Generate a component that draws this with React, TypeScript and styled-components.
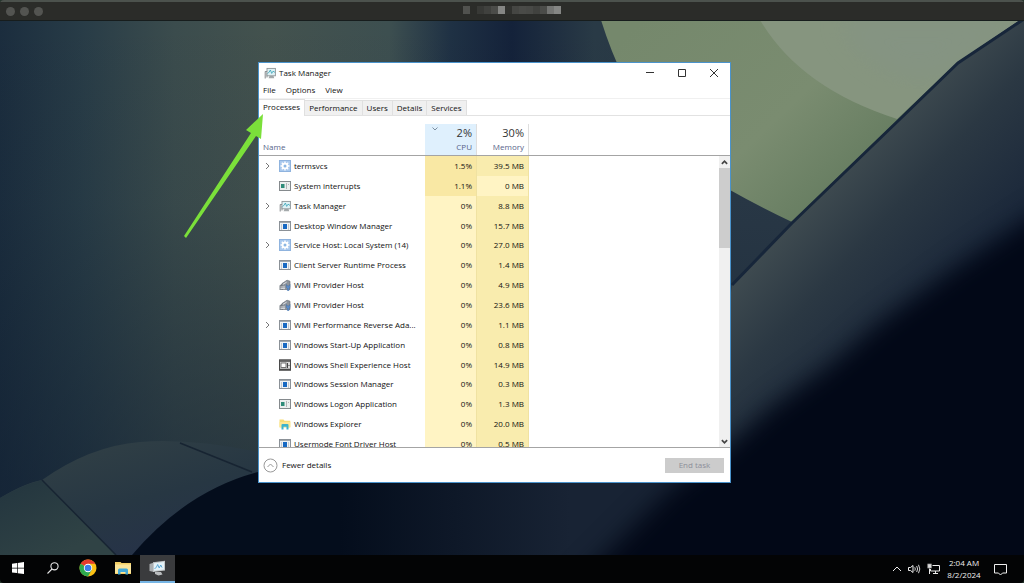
import React from 'react';
import styled, { createGlobalStyle, css } from 'styled-components';

const GlobalStyle = createGlobalStyle`
  *, *::before, *::after { box-sizing: border-box; }
  body { margin: 0; background: #25372d; }
  body, button { font-family: "Open Sans", "Noto Sans", sans-serif; font-size: 8px; line-height: 12px; }
  button { border: 0; padding: 0; background: none; color: inherit; }
  svg { display: block; flex: none; }
`;

const Screen = styled.div`
  display: flex;
  flex-direction: column;
  min-height: 100vh;
  overflow: hidden;
  border-radius: 4px;
`;

const HostBar = styled.header`
  display: grid;
  grid-template-columns: 1fr auto 1fr;
  align-items: center;
  height: 21px;
  padding: 0 6px;
  background: #2b2c29;
  border-top: 2px solid #4c524d;
  border-bottom: 1px solid #171d1d;
`;

const Lights = styled.div`
  display: flex;
  gap: 5px;
`;

const Light = styled.button`
  width: 9px;
  height: 9px;
  border-radius: 50%;
  background: #535451;
`;

const Redacted = styled.div`
  display: flex;
  height: 8px;
  margin-bottom: 2px;
`;

const Pixel = styled.span<{ $tone: string }>`
  width: 7px;
  background: ${(p) => p.$tone};
`;

const Desktop = styled.main`
  position: relative;
  flex: 1;
  min-height: 534px;
  overflow: hidden;
  background: #050d1c;
`;

const Backdrop = styled.svg`
  position: absolute;
  inset: 0;
  width: 100%;
  height: 100%;
`;

const Window = styled.section`
  position: absolute;
  left: 258px;
  top: 41px;
  display: flex;
  flex-direction: column;
  width: 473px;
  height: 421px;
  background: #fff;
  border: 1px solid #4a93cc;
  color: #111;
`;

const Pointer = styled.svg`
  position: absolute;
  left: 183px;
  top: 92px;
`;

const TitleBar = styled.div`
  display: flex;
  align-items: center;
  height: 20px;
  padding-left: 5px;
`;

const Title = styled.h1`
  flex: 1;
  margin: 0 0 0 3px;
  font-size: 8px;
  font-weight: 400;
`;

const WindowButton = styled.button`
  display: flex;
  align-items: center;
  justify-content: center;
  width: 32px;
  height: 20px;
  color: #333;
`;

const MenuBar = styled.nav`
  display: flex;
  gap: 10px;
  height: 16px;
  padding: 0 4px;
  border-bottom: 1px solid #f0f0f0;
`;

const MenuButton = styled.button`
  height: 14px;
`;

const Tabs = styled.div`
  display: flex;
  align-items: flex-end;
  height: 17px;
  border-bottom: 1px solid #e2e2e2;
`;

const Tab = styled.button<{ $active?: boolean }>`
  height: 15px;
  padding: 0 4px;
  background: #f0f0f0;
  border: 1px solid #e0e0e0;
  border-width: 1px 1px 0 0;
  ${(p) =>
    p.$active &&
    css`
      height: 17px;
      margin-bottom: -1px;
      padding-bottom: 2px;
      background: #fff;
    `}
`;

const ListArea = styled.div`
  display: flex;
  flex: 1;
  min-height: 0;
  border-bottom: 1px solid #a4a4a4;
`;

const TableBox = styled.div`
  flex: 1;
  overflow: hidden;
`;

const Table = styled.table`
  width: 100%;
  height: 338px;
  table-layout: fixed;
  border-collapse: separate;
  border-spacing: 0;
`;

const NameCol = styled.col`
  width: 166px;
`;

const ValueCol = styled.col`
  width: 52px;
`;

const HeadCell = styled.th`
  height: 40px;
  padding: 0;
  font-weight: 400;
  color: #56648a;
  vertical-align: bottom;
  text-align: left;
  border-bottom: 1px solid #a4a4a4;
`;

const NameLabel = styled.div`
  padding: 0 4px 2px;
`;

const Usage = styled.div<{ $sorted?: boolean }>`
  position: relative;
  display: flex;
  flex-direction: column;
  justify-content: space-between;
  height: 31px;
  padding: 1px 4px 2px;
  text-align: right;
  border-right: 1px solid #dedede;
  background: ${(p) => (p.$sorted ? '#dff0fd' : '#fff')};
`;

const Total = styled.span`
  font-size: 11px;
  line-height: 16px;
  color: #333;
`;

const SortMark = styled.svg`
  position: absolute;
  left: 7px;
  top: 3px;
`;

const Cell = styled.td`
  padding: 0;
`;

const HEAT = { low: '#fff4c4', mid: '#f9ecae', high: '#f9e8a4' };

const ValueCell = styled.td<{ $heat: keyof typeof HEAT }>`
  padding: 0 4px 0 0;
  text-align: right;
  background: ${(p) => HEAT[p.$heat]};
  border-right: 1px solid #f0e2a2;
`;

const ProcessName = styled.div`
  display: flex;
  align-items: center;
  padding-left: 5px;
  height: 12px;
`;

const Expander = styled.span`
  width: 15px;
  color: #777;
`;

const ProcessLabel = styled.span`
  flex: 1;
  padding: 0 4px 0 3px;
  overflow: hidden;
  white-space: nowrap;
  text-overflow: ellipsis;
`;

const ScrollColumn = styled.div`
  display: flex;
  flex-direction: column;
  width: 11px;
`;

const ScrollHead = styled.div`
  height: 40px;
  border-bottom: 1px solid #a4a4a4;
`;

const ScrollTrack = styled.div`
  display: flex;
  flex-direction: column;
  flex: 1;
  background: #f0f0f0;
`;

const ScrollButton = styled.button`
  display: flex;
  align-items: center;
  justify-content: center;
  height: 12px;
  color: #444;
`;

const ScrollThumb = styled.div`
  height: 80px;
  margin-bottom: auto;
  background: #cdcdcd;
`;

const Footer = styled.footer`
  display: flex;
  align-items: center;
  justify-content: space-between;
  height: 34px;
  padding: 0 6px 0 4px;
`;

const DetailsButton = styled.button`
  display: flex;
  align-items: center;
  gap: 4px;
`;

const EndButton = styled.button`
  width: 59px;
  height: 15px;
  background: #cccccc;
  color: #8c8f9a;
`;

const Taskbar = styled.footer`
  display: flex;
  align-items: center;
  height: 28px;
  background: #030405;
  color: #eee;
`;

const TaskButton = styled.button<{ $active?: boolean }>`
  display: flex;
  align-items: center;
  justify-content: center;
  width: 35px;
  height: 28px;
  border-bottom: 2px solid ${(p) => (p.$active ? '#76b5e5' : 'transparent')};
  background: ${(p) => (p.$active ? '#3a3b3d' : 'none')};
`;

const Tray = styled.div`
  display: flex;
  align-items: center;
  gap: 6px;
  margin-left: auto;
  padding-right: 17px;
`;

const Clock = styled.time`
  width: 36px;
  margin-right: 6px;
  text-align: center;
`;

type IconKind = 'gear' | 'logon' | 'monitor' | 'app' | 'wmi' | 'shell' | 'folder';

const MonitorIcon = ({ size = 12 }: { size?: number }) => (
  <svg width={size} height={size} viewBox="0 0 12 12" aria-hidden="true">
    <path d="M1.200 11.500V4.500h2.500" fill="none" stroke="#777c7e" strokeWidth=".9" />
    <path d="M2 5.500h2v5H2z" fill="#c5c8c8" />
    <path d="M5.500 9h4l.8 2.200H4.500z" fill="#a5aaac" />
    <rect x="3" y="1.400" width="8.400" height="7.400" fill="#dff1f5" stroke="#8d9497" strokeWidth=".9" />
    <path d="M3.600 6.600 5.200 5l1.200-2 1.300 3.400L9 4.200l2 1.200" fill="none" stroke="#36a3b8" strokeWidth=".8" />
  </svg>
);

const ProcessIcon = ({ kind }: { kind: IconKind }) => {
  if (kind === 'monitor') return <MonitorIcon />;
  return (
    <svg width="12" height="12" viewBox="0 0 12 12" aria-hidden="true">
      {kind === 'gear' && (
        <>
          <rect x=".5" y=".5" width="11" height="11" fill="#a9c9ee" stroke="#8fb3de" />
          <path d="M6 1.500v9M1.500 6h9M2.800 2.800l6.400 6.400M9.200 2.800 2.800 9.200" stroke="#fff" strokeWidth="1.400" />
          <circle cx="6" cy="6" r="3.300" fill="#fff" />
          <circle cx="6" cy="6" r="1.500" fill="#8ab6e3" />
        </>
      )}
      {kind === 'logon' && (
        <>
          <rect x=".5" y="1.500" width="11" height="9" fill="#eceeee" stroke="#858a8d" />
          <rect x="2" y="4" width="3.500" height="4" fill="#2f8b79" />
          <path d="M7.500 3v6M9.500 4v1" stroke="#b2b6b8" />
        </>
      )}
      {kind === 'app' && (
        <>
          <rect x=".5" y="1.500" width="11" height="9" fill="#f0f3f5" stroke="#8b9197" />
          <path d="M1 2.500h10" stroke="#a2aab0" />
          <path d="M2.500 4v6M9.500 4v6" stroke="#c5ccd1" />
          <rect x="4" y="4" width="4" height="5" fill="#1769c2" />
        </>
      )}
      {kind === 'wmi' && (
        <>
          <path d="M.5 6.500 4 4v7H.5z" fill="#7d838a" />
          <path d="M3 4.500 8 1.200l3 1V10.500H3z" fill="#8d949c" stroke="#5f666d" strokeWidth=".6" />
          <path d="M3.800 5.400 7.600 3.200M1.500 8h4.500M1.500 9.600h4.500" stroke="#e5e8eb" strokeWidth=".9" />
          <path d="M7.400 5.500v3l1 .8v2.200h1.600V9.300l1-.8v-3L10 7H8.500z" fill="#5f8fca" stroke="#3e6da6" strokeWidth=".5" />
        </>
      )}
      {kind === 'shell' && (
        <>
          <rect x=".5" y=".8" width="11" height="10.400" fill="#d9d9d9" stroke="#4a4a4a" />
          <path d="M0 2h12M0 10.500h12" stroke="#4a4a4a" strokeWidth="1.400" />
          <rect x="2" y="4" width="5" height="4.500" fill="#fff" stroke="#555" strokeWidth=".8" />
          <path d="M8.500 4v5M10 6v1" stroke="#444" />
        </>
      )}
      {kind === 'folder' && (
        <>
          <path d="M.5 1.500h4l1 1.200h5.800V9.500H.5z" fill="#f7dd78" />
          <path d="M.5 4h10.800v5H.5z" fill="#fde894" />
          <path d="M2.500 11.500v-4.500q0-1 1-1h5q1 0 1 1v4.500H7.500V8.800h-3v2.700z" fill="#3bb3cd" />
        </>
      )}
    </svg>
  );
};

const Chevron = ({ d, size = 8, width = 1 }: { d: string; size?: number; width?: number }) => (
  <svg width={size} height={size} viewBox="0 0 8 8" fill="none" stroke="currentColor" strokeWidth={width} aria-hidden="true">
    <path d={d} />
  </svg>
);

interface Process {
  name: string;
  icon: IconKind;
  cpu: string;
  memory: string;
  group?: boolean;
}

const PROCESSES: Process[] = [
  { name: 'termsvcs', icon: 'gear', cpu: '1.5%', memory: '39.5 MB', group: true },
  { name: 'System interrupts', icon: 'logon', cpu: '1.1%', memory: '0 MB' },
  { name: 'Task Manager', icon: 'monitor', cpu: '0%', memory: '8.8 MB', group: true },
  { name: 'Desktop Window Manager', icon: 'app', cpu: '0%', memory: '15.7 MB' },
  { name: 'Service Host: Local System (14)', icon: 'gear', cpu: '0%', memory: '27.0 MB', group: true },
  { name: 'Client Server Runtime Process', icon: 'app', cpu: '0%', memory: '1.4 MB' },
  { name: 'WMI Provider Host', icon: 'wmi', cpu: '0%', memory: '4.9 MB' },
  { name: 'WMI Provider Host', icon: 'wmi', cpu: '0%', memory: '23.6 MB' },
  { name: 'WMI Performance Reverse Ada...', icon: 'app', cpu: '0%', memory: '1.1 MB', group: true },
  { name: 'Windows Start-Up Application', icon: 'app', cpu: '0%', memory: '0.8 MB' },
  { name: 'Windows Shell Experience Host', icon: 'shell', cpu: '0%', memory: '14.9 MB' },
  { name: 'Windows Session Manager', icon: 'app', cpu: '0%', memory: '0.3 MB' },
  { name: 'Windows Logon Application', icon: 'logon', cpu: '0%', memory: '1.3 MB' },
  { name: 'Windows Explorer', icon: 'folder', cpu: '0%', memory: '20.0 MB' },
  { name: 'Usermode Font Driver Host', icon: 'app', cpu: '0%', memory: '0.5 MB' },
];

const REDACTED = [
  '#51524f', '#2b2c29', '#383936', '#40413e', '#4b4c49', '#858684', '#30312e',
  '#454643', '#4a4b48', '#484946', '#41423f', '#4b4c49', '#747573', '#858684',
];

const Wallpaper = () => (
  <Backdrop viewBox="0 21 1024 534" preserveAspectRatio="none" aria-hidden="true">
    <defs>
      <linearGradient id="wall" x1="0" x2="1024" y1="0" y2="0" gradientUnits="userSpaceOnUse">
        <stop offset="0" stopColor="#1b2d3e" />
        <stop offset=".08" stopColor="#283c47" />
        <stop offset=".17" stopColor="#3b4c4d" />
        <stop offset=".26" stopColor="#43524e" />
        <stop offset=".38" stopColor="#3d4f50" />
        <stop offset=".44" stopColor="#1f3144" />
        <stop offset=".5" stopColor="#14223a" />
        <stop offset=".58" stopColor="#293a46" />
        <stop offset=".72" stopColor="#2a3947" />
      </linearGradient>
      <linearGradient id="shade" x1="0" x2="0" y1="21" y2="480" gradientUnits="userSpaceOnUse">
        <stop offset="0" stopColor="#0a1420" stopOpacity="0" />
        <stop offset=".4" stopColor="#0f1d2c" stopOpacity=".08" />
        <stop offset="1" stopColor="#0f1d30" stopOpacity=".5" />
      </linearGradient>
      <linearGradient id="moon" x1="640" x2="830" y1="20" y2="220" gradientUnits="userSpaceOnUse">
        <stop offset="0" stopColor="#75886c" />
        <stop offset=".6" stopColor="#7a8c70" />
        <stop offset="1" stopColor="#647b5f" />
      </linearGradient>
      <linearGradient id="band" x1="840" x2="975" y1="160" y2="285" gradientUnits="userSpaceOnUse">
        <stop offset="0" stopColor="#404c51" />
        <stop offset=".4" stopColor="#2b3843" />
        <stop offset="1" stopColor="#182539" />
      </linearGradient>
      <linearGradient id="leaf" x1="130" x2="160" y1="440" y2="555" gradientUnits="userSpaceOnUse">
        <stop offset="0" stopColor="#2f3e45" />
        <stop offset=".5" stopColor="#273743" />
        <stop offset="1" stopColor="#263248" />
      </linearGradient>
      <linearGradient id="fold" x1="20" x2="60" y1="480" y2="555" gradientUnits="userSpaceOnUse">
        <stop offset="0" stopColor="#24363f" />
        <stop offset="1" stopColor="#304345" />
      </linearGradient>
      <linearGradient id="floor" x1="340" x2="570" y1="0" y2="0" gradientUnits="userSpaceOnUse">
        <stop offset="0" stopColor="#040d1c" />
        <stop offset="1" stopColor="#182334" />
      </linearGradient>
      <filter id="soft" x="-20%" y="-20%" width="140%" height="140%" colorInterpolationFilters="sRGB">
        <feGaussianBlur stdDeviation="12" />
      </filter>
    </defs>
    <rect y="21" width="1024" height="534" fill="url(#wall)" />
    <rect y="21" width="1024" height="534" fill="url(#shade)" />
    <path d="M601 20Q640 145 730 190Q760 207 792 222L900 118L958 62L1024 16V0H601Z" fill="url(#moon)" />
    <path d="M760 20Q800 88 897 119L958 62L1020 20Z" fill="#86957f" />
    <path d="M840 20Q850 50 900 75Q925 80 945 72L958 62L1020 20Z" fill="#83928a" opacity=".35" filter="url(#soft)" />
    <path d="M732 284L792 222L900 118L958 62L1024 18V555H700Z" fill="url(#band)" />
    <path d="M732 285L792 223L900 119L958 63L1024 19" fill="none" stroke="#17263a" strokeWidth="3" />
    <path d="M0 498Q25 483 42 480Q90 446 140 442Q190 438 258 452V482Q180 500 134 555H0Z" fill="url(#leaf)" />
    <path d="M0 498Q24 484 42 480L116 555H0Z" fill="url(#fold)" />
    <path d="M42 480L116 555M180 443L252 472" fill="none" stroke="#172432" strokeWidth="1.500" />
    <path d="M132 555Q188 489 262 471H730V555Z" fill="url(#floor)" />
    <path d="M1100 175L1024 222L955 268L880 322L830 365L770 408L728 445L670 490L570 590H1100Z" fill="#020817" filter="url(#soft)" />
  </Backdrop>
);

export default function App() {
  return (
    <>
      <GlobalStyle />
      <Screen>
        <HostBar>
          <Lights>
            <Light aria-label="Close session" />
            <Light aria-label="Minimize session" />
            <Light aria-label="Zoom session" />
          </Lights>
          <Redacted>
            {REDACTED.map((tone, i) => (
              <Pixel key={i} $tone={tone} />
            ))}
          </Redacted>
        </HostBar>

        <Desktop>
          <Wallpaper />
          <Window>
            <TitleBar>
              <MonitorIcon />
              <Title>Task Manager</Title>
              <WindowButton aria-label="Minimize">
                <Chevron d="M0 3.500h8" />
              </WindowButton>
              <WindowButton aria-label="Maximize">
                <Chevron d="M.5.5h7v7h-7z" />
              </WindowButton>
              <WindowButton aria-label="Close">
                <Chevron d="M0 0l8 8M8 0L0 8" />
              </WindowButton>
            </TitleBar>
            <MenuBar>
              <MenuButton>File</MenuButton>
              <MenuButton>Options</MenuButton>
              <MenuButton>View</MenuButton>
            </MenuBar>
            <Tabs role="tablist">
              <Tab role="tab" aria-selected="true" $active>Processes</Tab>
              <Tab role="tab">Performance</Tab>
              <Tab role="tab">Users</Tab>
              <Tab role="tab">Details</Tab>
              <Tab role="tab">Services</Tab>
            </Tabs>
            <ListArea>
              <TableBox>
                <Table>
                  <colgroup>
                    <NameCol />
                    <ValueCol />
                    <ValueCol />
                    <col />
                  </colgroup>
                  <thead>
                    <tr>
                      <HeadCell scope="col"><NameLabel>Name</NameLabel></HeadCell>
                      <HeadCell scope="col">
                        <Usage $sorted>
                          <SortMark width="6" height="4" viewBox="0 0 6 4" fill="none" stroke="#7b8ea0">
                            <path d="M.5.5 3 3 5.500.5" />
                          </SortMark>
                          <Total>2%</Total>
                          <span>CPU</span>
                        </Usage>
                      </HeadCell>
                      <HeadCell scope="col">
                        <Usage>
                          <Total>30%</Total>
                          <span>Memory</span>
                        </Usage>
                      </HeadCell>
                      <HeadCell as="td" />
                    </tr>
                  </thead>
                  <tbody>
                    {PROCESSES.map((p, i) => (
                      <tr key={i}>
                        <Cell>
                          <ProcessName>
                            <Expander>{p.group && <Chevron d="M2 1l3 3-3 3" />}</Expander>
                            <ProcessIcon kind={p.icon} />
                            <ProcessLabel>{p.name}</ProcessLabel>
                          </ProcessName>
                        </Cell>
                        <ValueCell $heat={p.cpu === '0%' ? 'low' : 'high'}>{p.cpu}</ValueCell>
                        <ValueCell $heat={p.memory === '0 MB' ? 'low' : 'mid'}>{p.memory}</ValueCell>
                        <Cell />
                      </tr>
                    ))}
                  </tbody>
                </Table>
              </TableBox>
              <ScrollColumn>
                <ScrollHead />
                <ScrollTrack>
                  <ScrollButton aria-label="Scroll up">
                    <Chevron d="M1 5.500l3-3 3 3" size={7} width={2} />
                  </ScrollButton>
                  <ScrollThumb />
                  <ScrollButton aria-label="Scroll down">
                    <Chevron d="M1 2.500l3 3 3-3" size={7} width={2} />
                  </ScrollButton>
                </ScrollTrack>
              </ScrollColumn>
            </ListArea>
            <Footer>
              <DetailsButton>
                <svg width="15" height="15" viewBox="0 0 15 15" fill="none" stroke="#999" aria-hidden="true">
                  <circle cx="7.500" cy="7.500" r="6.500" />
                  <path d="M4.500 9l3-3 3 3" />
                </svg>
                Fewer details
              </DetailsButton>
              <EndButton disabled>End task</EndButton>
            </Footer>
          </Window>
          <Pointer width="82" height="126" viewBox="0 0 82 126" aria-hidden="true">
            <path d="M80 1L63 17L68 20L1 123L3 125L73 23L78 26Z" fill="#7be03a" />
          </Pointer>
        </Desktop>

        <Taskbar>
          <TaskButton aria-label="Start">
            <svg width="12" height="12" viewBox="0 0 12 12" fill="#fff">
              <path d="M0 1.700 5 1v4.700H0zM5.700.9 12 0v5.700H5.700zM0 6.400h5v4.700l-5-.7zM5.700 6.400H12V12l-6.300-.8z" />
            </svg>
          </TaskButton>
          <TaskButton aria-label="Search">
            <svg width="12" height="12" viewBox="0 0 12 12" fill="none" stroke="#e6e6e6" strokeWidth="1.100">
              <circle cx="7.500" cy="4.300" r="3.600" />
              <path d="M5 7 .5 11.500" />
            </svg>
          </TaskButton>
          <TaskButton aria-label="Chrome">
            <svg width="18" height="18" viewBox="0 0 18 18">
              <circle cx="9" cy="9" r="8.500" fill="#fbc116" />
              <path d="M9 9 1.640 4.750A8.500 8.500 0 0 1 16.360 4.750H9z" fill="#e33b2e" />
              <path d="M9 9 1.640 4.750A8.500 8.500 0 0 0 9 17.500L12.680 11.120z" fill="#2da94f" />
              <circle cx="9" cy="9" r="4.200" fill="#fff" />
              <circle cx="9" cy="9" r="3.300" fill="#3b7de9" />
            </svg>
          </TaskButton>
          <TaskButton aria-label="File Explorer">
            <svg width="16" height="14" viewBox="0 0 16 14">
              <path d="M0 1h5.500l1 1H16v11H0z" fill="#f3cf66" />
              <path d="M0 3.500h16V12H0z" fill="#fbe59a" />
              <path d="M3 13.500V9q0-1.500 1.500-1.500h7q1.500 0 1.500 1.500v4.500h-2.500V11h-5v2.500z" fill="#43a9d8" />
            </svg>
          </TaskButton>
          <TaskButton aria-label="Task Manager" $active>
            <svg width="17" height="16" viewBox="0 0 17 16">
              <path d="M.5 4 5 2.500V12l-4.500-1z" fill="#a9adb0" />
              <path d="M6 12h6l1.500 2.500-4 1L6 14z" fill="#b9bcbe" />
              <path d="M4 2.200 16 .8v9.700L4 12z" fill="#c4c8ca" />
              <path d="M5 3.300 15 2.100v7.400L5 10.700z" fill="#e4f2f8" />
              <path d="M5.500 9 7.500 7l1.200-2.500L10.200 8l1.500-3 1.300 2.500" fill="none" stroke="#4d9fd0" strokeWidth=".9" />
            </svg>
          </TaskButton>
          <Tray>
            <svg width="10" height="10" viewBox="0 0 10 10" fill="none" stroke="currentColor">
              <path d="M1 7l4-4 4 4" />
            </svg>
            <svg width="13" height="10" viewBox="0 0 13 10" fill="none" stroke="currentColor">
              <path d="M.5 3.500h2l2.500-2v7l-2.500-2h-2z" />
              <path d="M6.800 3.300q1 1.700 0 3.400M8.700 2q1.800 3 0 6M10.500.8q2.600 4.200 0 8.400" strokeWidth=".9" />
            </svg>
            <svg width="13" height="12" viewBox="0 0 13 12" fill="none" stroke="currentColor">
              <path d="M5.500 2.500h7v5.500h-9V6M6 10.500h5M8.500 8v2.500M2.500 5.500V11" />
              <rect x=".8" y="1" width="3.500" height="4" fill="#ddd" stroke="#999" strokeWidth=".7" />
            </svg>
            <Clock>
              2:04 AM
              <br />
              8/2/2024
            </Clock>
            <svg width="13" height="13" viewBox="0 0 13 13" fill="none" stroke="currentColor">
              <path d="M.5 1.500h12v8.500H8.500l-2 2-2-2h-4z" />
            </svg>
          </Tray>
        </Taskbar>
      </Screen>
    </>
  );
}
